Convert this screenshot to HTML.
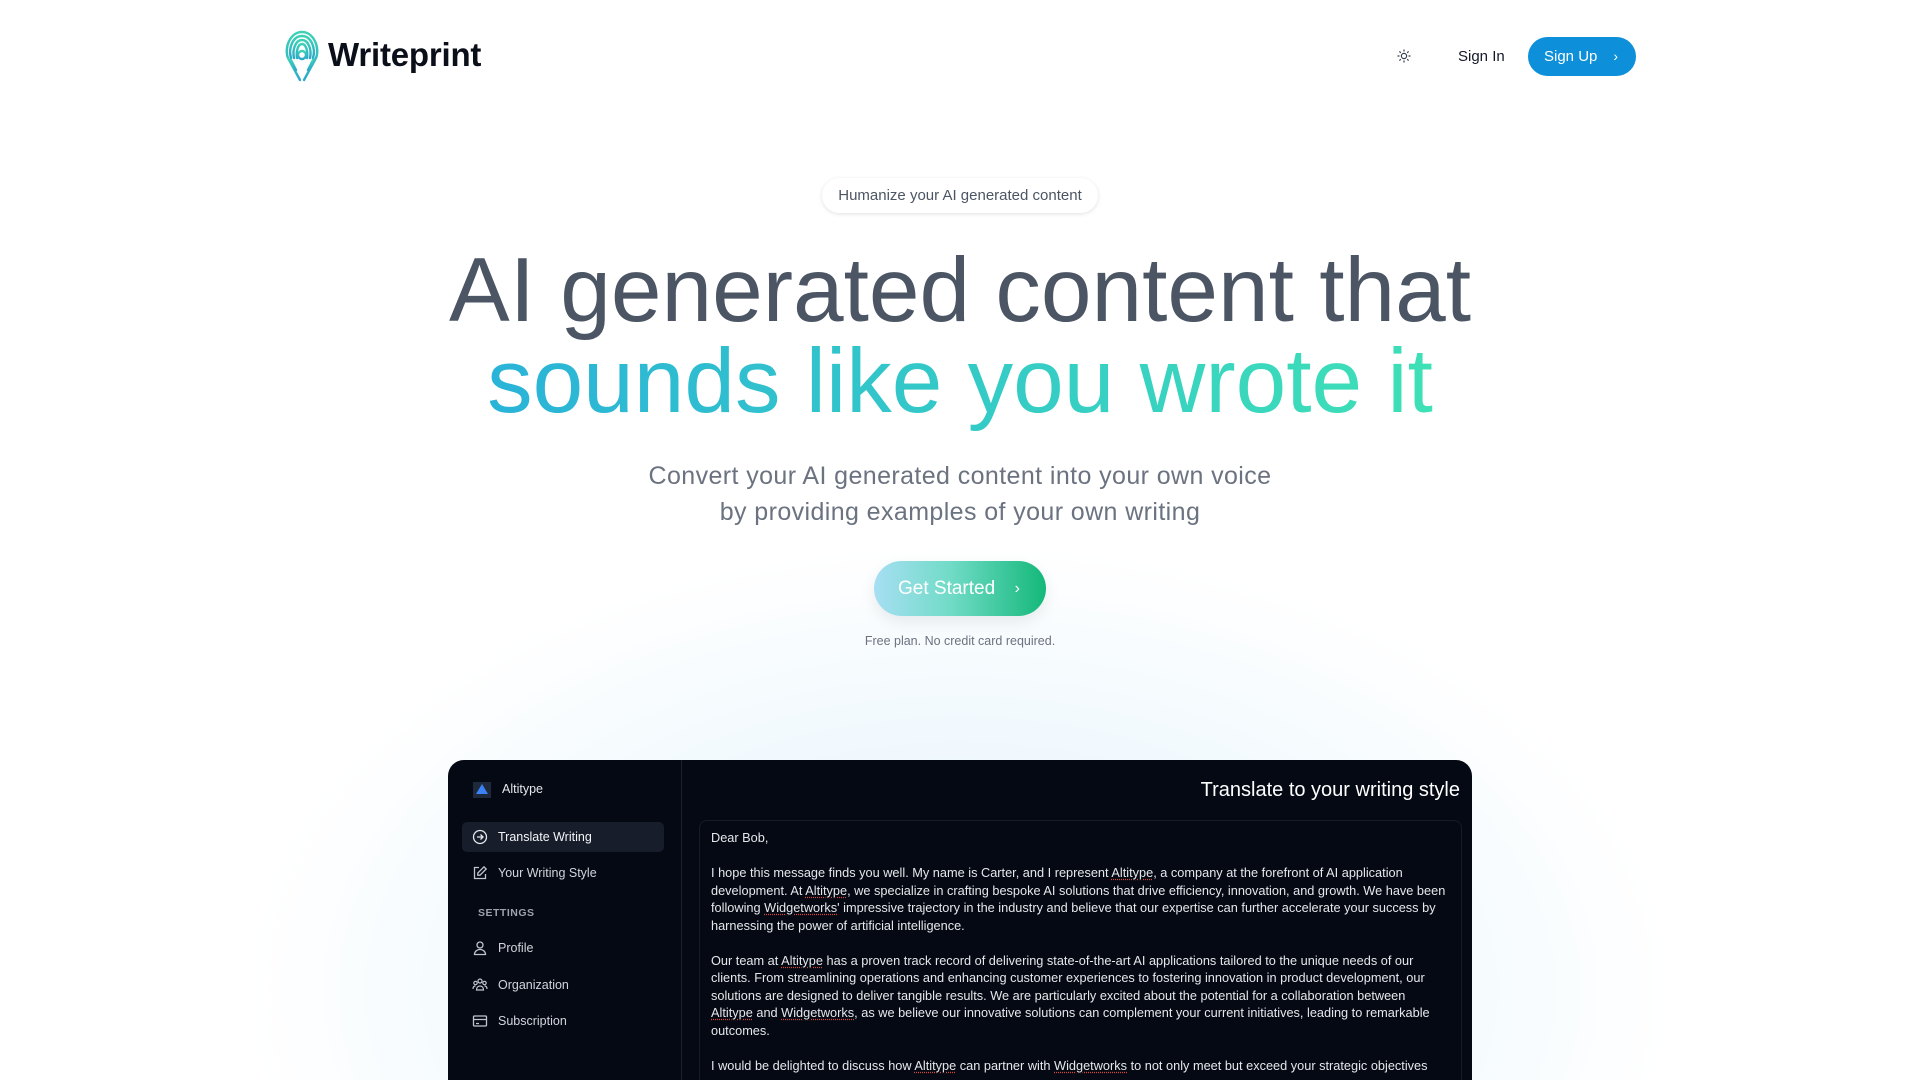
<!DOCTYPE html>
<html style="height:1080px;overflow:hidden"><head><meta charset="utf-8"><style>
*{box-sizing:border-box;margin:0;padding:0}
body{width:1920px;height:1080px;overflow:hidden;background:#fff;font-family:"Liberation Sans",sans-serif;position:relative}
.glow{position:absolute;left:240px;top:540px;width:1440px;height:540px;overflow:hidden}
.glow div{position:absolute;left:0;top:0;width:1440px;height:900px;border-radius:50%;background:radial-gradient(ellipse at center,rgba(200,230,250,.55) 0%,rgba(220,240,252,.35) 45%,rgba(255,255,255,0) 70%)}
.abs{position:absolute}
.logo{left:282px;top:28px}
.brand{left:328px;top:36px;font-size:33px;font-weight:bold;color:#0b0f19;letter-spacing:-0.2px}
.signin{left:1458px;top:48px;font-size:15px;color:#111827}
.signup{left:1528px;top:37px;width:108px;height:39px;border-radius:20px;background:#0d8fd9;color:#fff;font-size:15px;line-height:39px;padding-left:16px}
.pill{left:822px;top:178px;width:276px;height:35px;border-radius:18px;background:#fff;box-shadow:0 1px 4px rgba(0,0,0,.12);font-size:15px;color:#4b5563;text-align:center;line-height:35px}
.h1{left:0;width:1920px;text-align:center;font-size:91px;line-height:1}
.l1{top:245px;color:#4b5563}
.l2{top:336px}
.l2 span{background:linear-gradient(90deg,#2ab3d8,#3ee0b6);-webkit-background-clip:text;background-clip:text;color:transparent}
.sub{left:0;width:1920px;text-align:center;font-size:25px;letter-spacing:.4px;color:#6b7280;line-height:36px;top:458px}
.gs{left:874px;top:561px;width:172px;height:55px;border-radius:28px;background:linear-gradient(90deg,#a7dff3,#70dbc6 45%,#14b87a);color:#fff;font-size:19px;line-height:55px;padding-left:24px;box-shadow:0 6px 16px rgba(0,0,0,.08)}
.free{left:0;width:1920px;text-align:center;top:634px;font-size:12.5px;color:#6b7280}
.panel{left:448px;top:760px;width:1024px;height:320px;border-radius:16px 16px 0 0;background:#050913;overflow:hidden}
.side{position:absolute;left:0;top:0;width:234px;height:320px;border-right:1px solid #1a2030}
.si{position:absolute;left:14px;width:202px;height:30px;font-size:12.5px;color:#d1d5db;line-height:30px;padding-left:36px}
.si svg{position:absolute;left:10px;top:7px}
.title{position:absolute;right:12px;top:19px;font-size:20px;color:#fff}
.ta{position:absolute;left:251px;top:60px;width:763px;height:260px;overflow:hidden;border:1px solid #151b28;border-bottom:none;border-radius:8px 8px 0 0;padding:8px 11px;font-size:12.75px;line-height:17.5px;color:#e5e7eb}
.ta p{margin-bottom:17.5px}
u{text-decoration:underline dotted #e0403a;text-underline-offset:2px}
</style></head><body>
<div class="glow"><div></div></div>
<svg class="abs logo" width="40" height="56" viewBox="0 0 40 56" fill="none" stroke-linecap="round">
<defs><linearGradient id="g" x1="0" y1="0" x2="0" y2="1"><stop offset="0" stop-color="#3ed1b6"/><stop offset="1" stop-color="#2aa9c9"/></linearGradient></defs>
<g stroke="url(#g)" stroke-width="2.4">
<path d="M6 30 C2 20 8 4 20 4 C32 4 38 20 34 30 L22 52"/>
<path d="M9 30 C6 20 11 8 20 8 C29 8 34 20 31 30"/>
<path d="M12 30 C10 21 14 12 20 12 C26 12 30 21 28 30"/>
<path d="M15 30 C14 23 16 16 20 16 C24 16 26 23 25 30"/>
<path d="M6 30 L18 52"/><path d="M9 32 L14 42"/><path d="M31 32 L26 42"/>
<circle cx="20" cy="27" r="4"/><path d="M20 31 L20 52"/>
</g></svg>
<div class="abs brand">Writeprint</div>
<svg class="abs" style="left:1397px;top:49px" width="14" height="14" viewBox="0 0 14 14" stroke="#374151" stroke-width="1.2"><circle cx="7" cy="7" r="2.6" fill="none"/><path d="M7 0.5v2M7 11.5v2M0.5 7h2M11.5 7h2M2.4 2.4l1.4 1.4M10.2 10.2l1.4 1.4M2.4 11.6l1.4-1.4M10.2 3.8l1.4-1.4"/></svg>
<div class="abs signin">Sign In</div>
<div class="abs signup">Sign Up <span style="position:absolute;right:18px;font-size:14px">&#8250;</span></div>
<div class="abs pill">Humanize your AI generated content</div>
<div class="abs h1 l1">AI generated content that</div>
<div class="abs h1 l2"><span>sounds like you wrote it</span></div>
<div class="abs sub">Convert your AI generated content into your own voice<br>by providing examples of your own writing</div>
<div class="abs gs">Get Started <span style="position:absolute;right:26px;font-size:16px">&#8250;</span></div>
<div class="abs free">Free plan. No credit card required.</div>
<div class="abs panel">
 <div class="side">
  <svg style="position:absolute;left:25px;top:22px" width="18" height="16"><rect width="18" height="16" fill="#1e293b"/><path d="M9 2L15 12H3Z" fill="#3b82f6"/></svg>
  <div style="position:absolute;left:54px;top:22px;font-size:12.5px;color:#e5e7eb">Altitype</div>
  <div class="si" style="top:62px;background:#171d2b;border-radius:5px;color:#f3f4f6"><svg width="16" height="16" viewBox="0 0 16 16" fill="none" stroke="#e5e7eb" stroke-width="1.3"><circle cx="8" cy="8" r="6.5"/><path d="M5 8h6M8.5 5.5L11 8l-2.5 2.5"/></svg>Translate Writing</div>
  <div class="si" style="top:98px"><svg width="16" height="16" viewBox="0 0 16 16" fill="none" stroke="#c0c4cc" stroke-width="1.3"><path d="M7 2.5H2.5v11h11V9"/><path d="M12 1.8l2.2 2.2L8 10.2H5.8V8z"/></svg>Your Writing Style</div>
  <div style="position:absolute;left:30px;top:147px;font-size:10.5px;color:#9ca3af;font-weight:bold;letter-spacing:.5px">SETTINGS</div>
  <div class="si" style="top:173px"><svg width="16" height="16" viewBox="0 0 16 16" fill="none" stroke="#c0c4cc" stroke-width="1.3"><circle cx="8" cy="5" r="3"/><path d="M2.5 14.5c0-3 2.5-5 5.5-5s5.5 2 5.5 5z"/></svg>Profile</div>
  <div class="si" style="top:210px"><svg width="16" height="16" viewBox="0 0 16 16" fill="none" stroke="#c0c4cc" stroke-width="1.2"><circle cx="8" cy="4" r="2"/><circle cx="3.5" cy="6" r="1.7"/><circle cx="12.5" cy="6" r="1.7"/><path d="M4.5 13c0-2.5 1.5-4 3.5-4s3.5 1.5 3.5 4zM1 12c0-2 1-3 2.5-3M15 12c0-2-1-3-2.5-3"/></svg>Organization</div>
  <div class="si" style="top:246px"><svg width="16" height="16" viewBox="0 0 16 16" fill="none" stroke="#c0c4cc" stroke-width="1.3"><rect x="1.5" y="3" width="13" height="10" rx="1"/><path d="M1.5 6.5h13M4 10.5h3"/></svg>Subscription</div>
 </div>
 <div class="title">Translate to your writing style</div>
 <div class="ta">
  <p>Dear Bob,</p>
  <p>I hope this message finds you well. My name is Carter, and I represent <u>Altitype</u>, a company at the forefront of AI application<br>development. At <u>Altitype</u>, we specialize in crafting bespoke AI solutions that drive efficiency, innovation, and growth. We have been following <u>Widgetworks</u>' impressive trajectory in the industry and believe that our expertise can further accelerate your success by harnessing the power of artificial intelligence.</p>
  <p>Our team at <u>Altitype</u> has a proven track record of delivering state-of-the-art AI applications tailored to the unique needs of our<br>clients. From streamlining operations and enhancing customer experiences to fostering innovation in product development, our solutions are designed to deliver tangible results. We are particularly excited about the potential for a collaboration between<br><u>Altitype</u> and <u>Widgetworks</u>, as we believe our innovative solutions can complement your current initiatives, leading to remarkable<br>outcomes.</p>
  <p>I would be delighted to discuss how <u>Altitype</u> can partner with <u>Widgetworks</u> to not only meet but exceed your strategic objectives</p>
 </div>
</div>
</body></html>
